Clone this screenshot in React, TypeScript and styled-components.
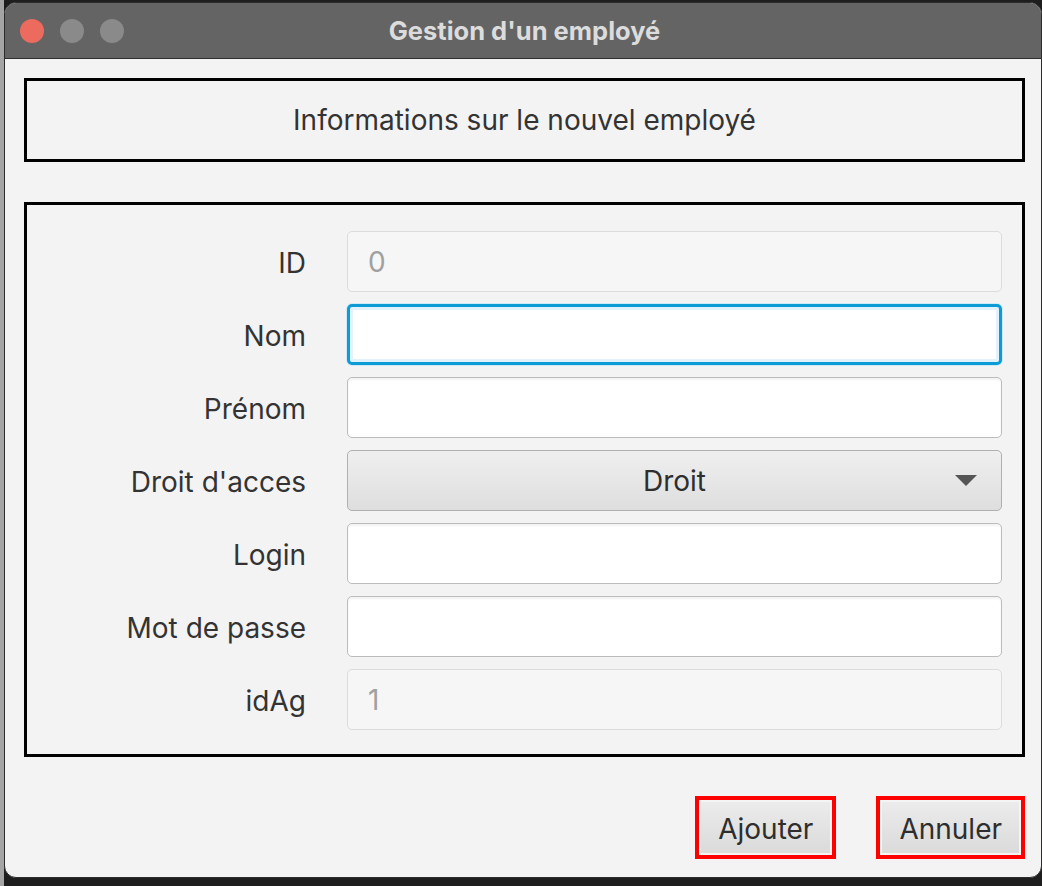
import React from "react";
import styled, { createGlobalStyle } from "styled-components";

const Global = createGlobalStyle`
  html, body { margin: 0; padding: 0; }
  body {
    width: 1042px;
    height: 886px;
    overflow: hidden;
    background: #1e1e1e;
    font-family: Inter, "Open Sans", "Liberation Sans", sans-serif;
  }
`;

const Desktop = styled.div`
  width: 1042px;
  height: 886px;
  box-sizing: border-box;
  padding: 2px 0 8px 4px;
  background: linear-gradient(to right, #a5a5a5 0, #a5a5a5 4px, #1e1e1e 4px);
  display: flex;
`;

const Window = styled.div`
  flex: 1;
  display: flex;
  flex-direction: column;
  background: #f3f3f3;
  border: 1px solid #2c2c2c;
  border-radius: 12px;
  overflow: hidden;
`;

const TitleBar = styled.div`
  height: 55px;
  flex: none;
  background: #646464;
  border-bottom: 1px solid #2e2e2e;
  display: grid;
  grid-template-columns: 1fr auto 1fr;
  align-items: center;
  padding: 0 0 0 15px;
`;

const Lights = styled.div`
  display: flex;
  gap: 16px;
`;

const Light = styled.span<{ $color: string }>`
  width: 24px;
  height: 24px;
  border-radius: 50%;
  background: ${(p) => p.$color};
`;

const Title = styled.div`
  color: #dcdcdc;
  font-weight: 700;
  font-size: 25.5px;
  transform: translateX(-6px);
`;

const Body = styled.div`
  flex: 1;
  display: flex;
  flex-direction: column;
  padding: 19px 16px 0 19px;
`;

const HeaderBox = styled.div`
  height: 78px;
  border: 3px solid #000;
  display: flex;
  align-items: center;
  justify-content: center;
  font-size: 28px;
  color: #333;
`;

const FormBox = styled.div`
  margin-top: 40px;
  height: 555px;
  box-sizing: border-box;
  border: 3px solid #000;
  padding: 26px 20px 0 0;
  display: flex;
  flex-direction: column;
  gap: 12px;
`;

const Row = styled.div`
  display: grid;
  grid-template-columns: 279px 1fr;
  column-gap: 41px;
  align-items: center;
  height: 61px;
`;

const Label = styled.div`
  text-align: right;
  font-size: 28px;
  color: #333;
  padding-top: 3px;
`;

const Field = styled.div<{ $state?: "disabled" | "focused" | "normal" }>`
  height: 100%;
  box-sizing: border-box;
  border-radius: 5px;
  display: flex;
  align-items: center;
  padding-left: 20px;
  font-size: 28px;
  color: #a0a0a0;
  background: ${(p) => (p.$state === "disabled" ? "#f6f6f6" : "#ffffff")};
  border: ${(p) =>
    p.$state === "focused"
      ? "3px solid #0d9bd6"
      : p.$state === "disabled"
      ? "1.5px solid #dcdcdc"
      : "1.5px solid #bcbcbc"};
  box-shadow: ${(p) =>
    p.$state === "focused"
      ? "inset 0 0 0 3px #e2f2fb, 0 0 0 1px #cfeaf7"
      : p.$state === "disabled"
      ? "none"
      : "inset 0 2px 2px rgba(0,0,0,0.05)"};
`;

const Combo = styled.div`
  height: 100%;
  box-sizing: border-box;
  border-radius: 5px;
  border: 1.5px solid #b0b0b0;
  background: linear-gradient(#efefef, #dedede);
  display: grid;
  grid-template-columns: 1fr 50px;
  align-items: center;
  font-size: 28px;
  color: #2e2e2e;
`;

const ComboText = styled.span`
  text-align: center;
  padding-left: 50px;
`;

const Arrow = styled.span`
  width: 0;
  height: 0;
  border-left: 11px solid transparent;
  border-right: 11px solid transparent;
  border-top: 11px solid #555;
  justify-self: start;
  margin-left: 4px;
`;

const Footer = styled.div`
  flex: 1;
  display: flex;
  justify-content: flex-end;
  align-items: flex-start;
  gap: 40px;
  padding-top: 39px;
`;

const Button = styled.button`
  height: 63px;
  box-sizing: border-box;
  border: 4px solid #ff0000;
  background: linear-gradient(#ececec, #dadada);
  font-family: inherit;
  font-size: 28px;
  color: #2e2e2e;
  padding: 2px 19px 0;
  box-shadow: inset 0 0 0 2px #f4f4f4;
`;

const App: React.FC = () => (
  <>
    <Global />
    <Desktop>
      <Window>
        <TitleBar>
          <Lights>
            <Light $color="#ed6a5e" />
            <Light $color="#8a8a8a" />
            <Light $color="#8a8a8a" />
          </Lights>
          <Title>Gestion d'un employé</Title>
          <span />
        </TitleBar>
        <Body>
          <HeaderBox>Informations sur le nouvel employé</HeaderBox>
          <FormBox>
            <Row>
              <Label>ID</Label>
              <Field $state="disabled">0</Field>
            </Row>
            <Row>
              <Label>Nom</Label>
              <Field $state="focused" />
            </Row>
            <Row>
              <Label>Prénom</Label>
              <Field />
            </Row>
            <Row>
              <Label>Droit d'acces</Label>
              <Combo>
                <ComboText>Droit</ComboText>
                <Arrow />
              </Combo>
            </Row>
            <Row>
              <Label>Login</Label>
              <Field />
            </Row>
            <Row>
              <Label>Mot de passe</Label>
              <Field />
            </Row>
            <Row>
              <Label>idAg</Label>
              <Field $state="disabled">1</Field>
            </Row>
          </FormBox>
          <Footer>
            <Button>Ajouter</Button>
            <Button>Annuler</Button>
          </Footer>
        </Body>
      </Window>
    </Desktop>
  </>
);

export default App;
